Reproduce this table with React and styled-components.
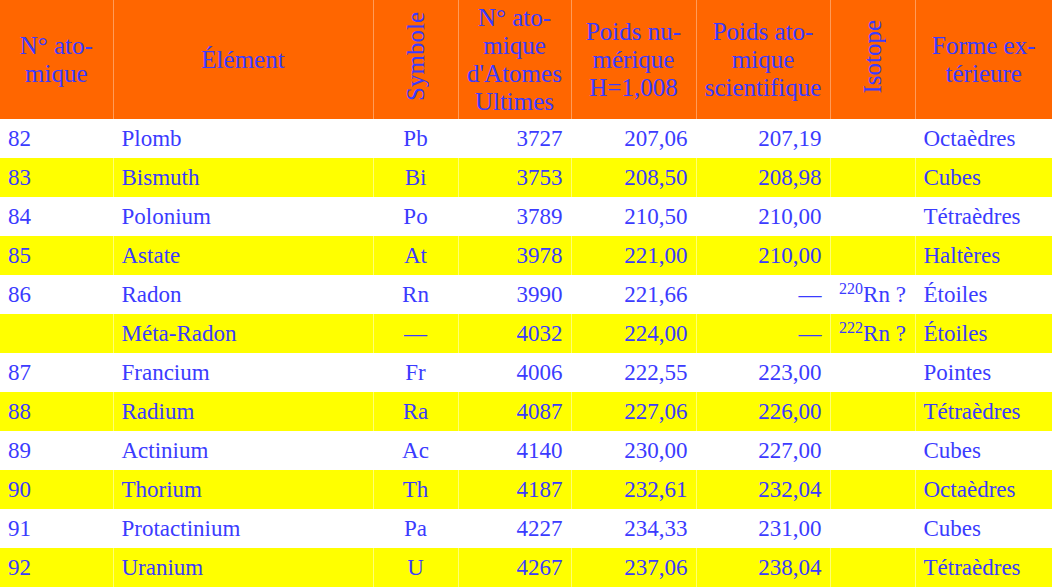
import React from 'react';
import styled, { createGlobalStyle } from 'styled-components';

const GlobalStyle = createGlobalStyle`
  html, body {
    margin: 0;
    padding: 0;
    background: #ffffff;
  }
  body {
    font-family: "Liberation Serif", "Times New Roman", serif;
  }
`;

const Table = styled.table`
  width: 1052px;
  table-layout: fixed;
  border-collapse: collapse;
  color: #3b3bff;
  font-family: "Liberation Serif", "Times New Roman", serif;
`;

const HeadCell = styled.th`
  height: 119px;
  padding: 0 4px;
  box-sizing: border-box;
  background: #ff6600;
  font-weight: normal;
  font-size: 25px;
  line-height: 28px;
  text-align: center;
  vertical-align: middle;
  border-left: 1px solid rgba(255, 255, 255, 0.35);
  &:first-child {
    border-left: none;
  }
`;

const Vertical = styled.span`
  display: inline-block;
  writing-mode: vertical-rl;
  transform: rotate(180deg);
`;

const Row = styled.tr`
  background: ${(p) => (p.$alt ? '#ffff00' : '#ffffff')};
`;

const Cell = styled.td`
  height: 39px;
  padding: 0 8px;
  box-sizing: border-box;
  font-size: 23px;
  white-space: nowrap;
  text-align: ${(p) => p.$align || 'left'};
  border-left: 1px solid rgba(255, 255, 255, 0.45);
  &:first-child {
    border-left: none;
  }
`;

const Sup = styled.sup`
  font-size: 16px;
  vertical-align: 8px;
  line-height: 0;
`;

const widths = [113, 260, 85, 113, 125, 134, 85, 137];

const rows = [
  ['82', 'Plomb', 'Pb', '3727', '207,06', '207,19', null, 'Octaèdres'],
  ['83', 'Bismuth', 'Bi', '3753', '208,50', '208,98', null, 'Cubes'],
  ['84', 'Polonium', 'Po', '3789', '210,50', '210,00', null, 'Tétraèdres'],
  ['85', 'Astate', 'At', '3978', '221,00', '210,00', null, 'Haltères'],
  ['86', 'Radon', 'Rn', '3990', '221,66', '—', '220', 'Étoiles'],
  ['', 'Méta-Radon', '—', '4032', '224,00', '—', '222', 'Étoiles'],
  ['87', 'Francium', 'Fr', '4006', '222,55', '223,00', null, 'Pointes'],
  ['88', 'Radium', 'Ra', '4087', '227,06', '226,00', null, 'Tétraèdres'],
  ['89', 'Actinium', 'Ac', '4140', '230,00', '227,00', null, 'Cubes'],
  ['90', 'Thorium', 'Th', '4187', '232,61', '232,04', null, 'Octaèdres'],
  ['91', 'Protactinium', 'Pa', '4227', '234,33', '231,00', null, 'Cubes'],
  ['92', 'Uranium', 'U', '4267', '237,06', '238,04', null, 'Tétraèdres'],
];

export default function App() {
  return (
    <>
      <GlobalStyle />
      <Table>
        <colgroup>
          {widths.map((w, i) => (
            <col key={i} style={{ width: w }} />
          ))}
        </colgroup>
        <thead>
          <tr>
            <HeadCell>N° ato-<br />mique</HeadCell>
            <HeadCell>Élément</HeadCell>
            <HeadCell><Vertical>Symbole</Vertical></HeadCell>
            <HeadCell>N° ato-<br />mique<br />d'Atomes<br />Ultimes</HeadCell>
            <HeadCell>Poids nu-<br />mérique<br />H=1,008</HeadCell>
            <HeadCell>Poids ato-<br />mique<br />scientifique</HeadCell>
            <HeadCell><Vertical>Isotope</Vertical></HeadCell>
            <HeadCell>Forme ex-<br />térieure</HeadCell>
          </tr>
        </thead>
        <tbody>
          {rows.map((r, i) => (
            <Row key={i} $alt={i % 2 === 1}>
              <Cell>{r[0]}</Cell>
              <Cell>{r[1]}</Cell>
              <Cell $align="center">{r[2]}</Cell>
              <Cell $align="right">{r[3]}</Cell>
              <Cell $align="right">{r[4]}</Cell>
              <Cell $align="right">{r[5]}</Cell>
              <Cell $align="center">
                {r[6] && (
                  <>
                    <Sup>{r[6]}</Sup>Rn ?
                  </>
                )}
              </Cell>
              <Cell>{r[7]}</Cell>
            </Row>
          ))}
        </tbody>
      </Table>
    </>
  );
}
